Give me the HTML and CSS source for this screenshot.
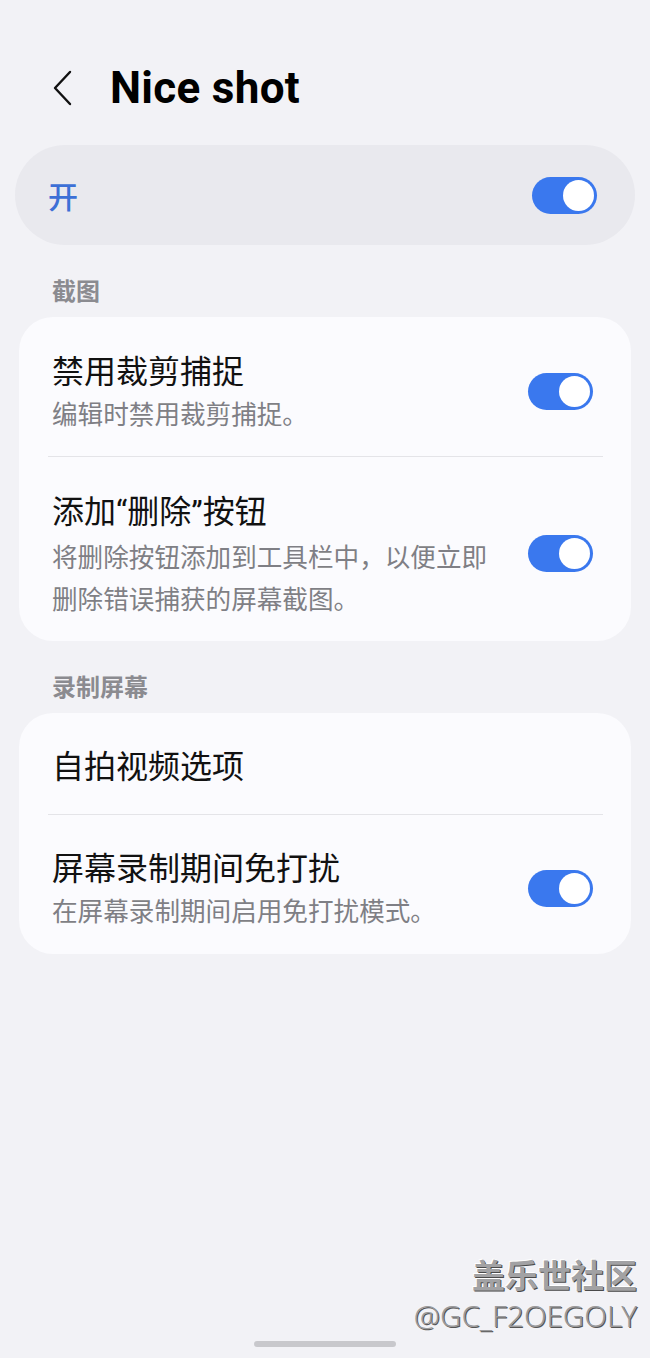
FILE: index.html
```html
<!DOCTYPE html>
<html lang="zh-CN">
<head>
  <meta charset="UTF-8">
  <meta name="viewport" content="width=device-width, initial-scale=1.0">
  <title>Nice shot</title>
  <link rel="stylesheet" href="styles.css">
</head>
<body>
  <div class="screen">

    <div class="topbar">
      <svg class="back" width="22" height="36" viewBox="0 0 22 36">
        <path d="M18 2 L3 18 L18 34" fill="none" stroke="#111" stroke-width="2.4" stroke-linecap="round" stroke-linejoin="round"/>
      </svg>
      <h1>Nice shot</h1>
    </div>

    <div class="master">
      <span class="master-label">开</span>
      <span class="switch"><span class="knob"></span></span>
    </div>

    <div class="section-title">截图</div>
    <div class="card">
      <div class="row">
        <div class="row-text">
          <div class="row-title">禁用裁剪捕捉</div>
          <div class="row-sub">编辑时禁用裁剪捕捉。</div>
        </div>
        <span class="switch"><span class="knob"></span></span>
      </div>
      <div class="divider"></div>
      <div class="row">
        <div class="row-text">
          <div class="row-title">添加<span class="q">“</span>删除<span class="q">”</span>按钮</div>
          <div class="row-sub">将删除按钮添加到工具栏中，以便立即删除错误捕获的屏幕截图。</div>
        </div>
        <span class="switch"><span class="knob"></span></span>
      </div>
    </div>

    <div class="section-title">录制屏幕</div>
    <div class="card">
      <div class="row row-single">
        <div class="row-text">
          <div class="row-title">自拍视频选项</div>
        </div>
      </div>
      <div class="divider"></div>
      <div class="row row-last">
        <div class="row-text">
          <div class="row-title">屏幕录制期间免打扰</div>
          <div class="row-sub">在屏幕录制期间启用免打扰模式。</div>
        </div>
        <span class="switch"><span class="knob"></span></span>
      </div>
    </div>

    <!-- watermark + gesture bar sit over the page -->
    <div class="watermark">
      <div class="wm-name">盖乐世社区</div>
      <div class="wm-user">@GC_F2OEGOLY</div>
    </div>
    <div class="home-bar"></div>
  </div>
</body>
</html>
```

FILE: styles.css
```css
body {
  margin: 0;
  padding: 0;
  background-color: #f2f2f6;
  font-family: "Noto Sans CJK SC", "Noto Sans", sans-serif;
  color: #111;
}

.screen {
  position: relative;
  width: 650px;
  height: 1358px;
  overflow: hidden;
}

.topbar {
  display: flex;
  align-items: center;
  height: 72px;
  padding: 52px 0 0 52px;
  box-sizing: content-box;
}

.back {
  display: block;
  margin-right: 36px;
}

h1 {
  margin: 0;
  font-family: Roboto, "Noto Sans", sans-serif;
  font-weight: 700;
  font-size: 44px;
  letter-spacing: 0.3px;
  line-height: 72px;
  color: #000;
}

.master {
  display: flex;
  align-items: center;
  justify-content: space-between;
  height: 100px;
  margin: 21px 15px 0 15px;
  padding: 0 38px 0 33px;
  border-radius: 50px;
  background-color: #e9e9ee;
}

.master-label {
  font-size: 30px;
  font-weight: 500;
  color: #3d70d6;
  line-height: 40px;
}

.switch {
  position: relative;
  flex: none;
  width: 65px;
  height: 37px;
  border-radius: 19px;
  background-color: #3a78ee;
}

.knob {
  position: absolute;
  top: 3px;
  right: 3px;
  width: 31px;
  height: 31px;
  border-radius: 50%;
  background-color: #fff;
}

.section-title {
  padding: 29px 0 11px 52px;
  font-size: 24px;
  font-weight: 700;
  line-height: 32px;
  color: #8b8b90;
}

.card + .section-title {
  padding-top: 29px;
}

.card {
  margin: 0 19px;
  border-radius: 34px;
  background-color: #fbfbfe;
}

.row {
  display: flex;
  align-items: center;
  gap: 34px;
  padding: 31px 38px 22px 33px;
}

.row-single {
  padding-top: 30px;
  padding-bottom: 29px;
}

.row-last {
  padding-top: 30px;
  padding-bottom: 23px;
}

.row-text {
  flex: 1;
  min-width: 0;
}

.row-title {
  font-size: 32px;
  line-height: 42px;
  color: #111;
}

.q {
  font-family: Roboto, sans-serif;
}

.row-sub {
  margin-top: 2px;
  font-size: 25.6px;
  line-height: 42px;
  color: #7f7f85;
}

.divider {
  height: 1px;
  margin: 0 28px 0 29px;
  background-color: #e4e4e8;
}

.watermark {
  position: absolute;
  right: 13px;
  top: 1252px;
  text-align: right;
}

.wm-name {
  font-size: 33px;
  font-weight: 700;
  line-height: 44px;
  color: #a2a2a4;
  text-shadow: 1px 1px 0 #4a4a4a, -1px -1px 0 #fff;
}

.wm-user {
  font-family: "Noto Sans", sans-serif;
  font-size: 29.5px;
  font-weight: 300;
  line-height: 40px;
  color: #9a9a9c;
  text-shadow: 1px 1px 0 #555;
}

.home-bar {
  position: absolute;
  left: 254px;
  bottom: 11px;
  width: 142px;
  height: 6px;
  border-radius: 3px;
  background-color: #c8c8cc;
}
```
